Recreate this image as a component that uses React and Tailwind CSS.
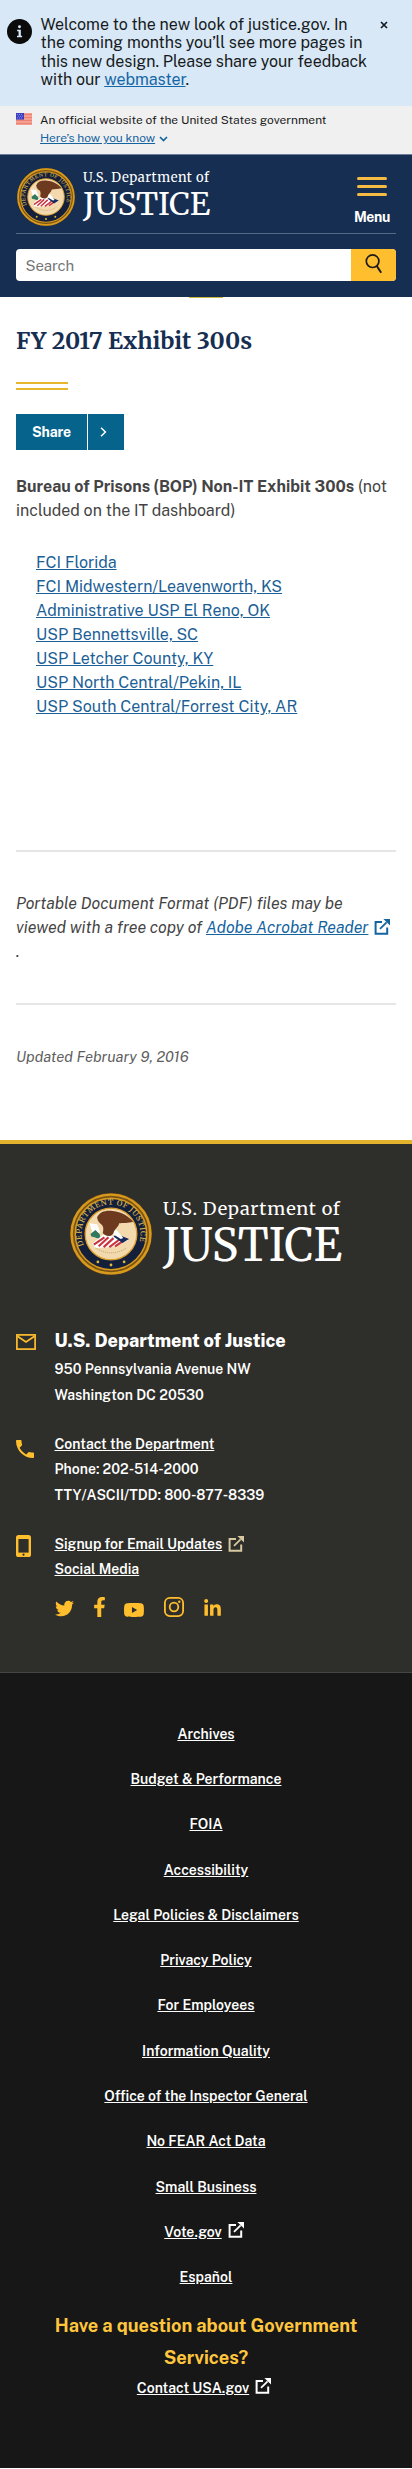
import React from 'react';
import { MdPhone } from 'react-icons/md';
import { FaTwitter, FaLinkedinIn } from 'react-icons/fa';

const EXHIBITS = [
  'FCI Florida',
  'FCI Midwestern/Leavenworth, KS',
  'Administrative USP El Reno, OK',
  'USP Bennettsville, SC',
  'USP Letcher County, KY',
  'USP North Central/Pekin, IL',
  'USP South Central/Forrest City, AR',
];

const LEGAL = [
  'Archives',
  'Budget & Performance',
  'FOIA',
  'Accessibility',
  'Legal Policies & Disclaimers',
  'Privacy Policy',
  'For Employees',
  'Information Quality',
  'Office of the Inspector General',
  'No FEAR Act Data',
  'Small Business',
  'Vote.gov',
  'Español',
];

function External({ className }) {
  return (
    <svg viewBox="0 0 16 16" className={`inline-block size-4 shrink-0 ${className}`} fill="none" stroke="currentColor" strokeWidth="2">
      <path d="M8 2.9H1.6v11.9h11.6V8.6" />
      <path d="M6 9.9l6.6-6.6" strokeWidth="1.8" />
      <path d="M9.4 0H16v6.6z" fill="currentColor" stroke="none" />
    </svg>
  );
}

function Seal({ id, className }) {
  return (
    <svg viewBox="0 0 100 100" className={className}>
      <circle cx="50" cy="50" r="50" fill="#7a5312" />
      <circle cx="50" cy="50" r="48" fill="none" stroke="#d89a1e" strokeWidth="3" />
      <circle cx="50" cy="50" r="43.6" fill="#141f3b" stroke="#d89a1e" strokeWidth="1.8" />
      <circle cx="50" cy="50" r="31.5" fill="#f3d9ae" stroke="#dca02a" strokeWidth="1.6" />
      <path id={id} d="M16.8 64A36 36 0 1 1 83.2 64" fill="none" />
      <text fill="#d8b352" fontSize="9.2" fontFamily="Merriweather, 'Liberation Serif', serif" textLength="136">
        <textPath href={`#${id}`}>DEPARTMENT OF JUSTICE</textPath>
      </text>
      <g fill="#e0bb3a">
        <circle cx="34" cy="84" r="1.7" />
        <circle cx="50" cy="87.8" r="1.7" />
        <circle cx="66" cy="84" r="1.7" />
      </g>
      <path d="M24 37l9 1 4 10-9 3z" fill="#fff" />
      <path d="M25 50l6-5 5 5 2 7-8-3-4-1z" fill="#2f7a5d" />
      <path d="M27 62l13-11 20 2 11 5-20 8-20 1z" fill="#fff" />
      <path d="M29 63l13-9M35 65l12-11M41 66l12-11M48 66l12-9M55 65l9-6" stroke="#c9353f" strokeWidth="2.6" />
      <path d="M57 50l15 6-8 5-11-8z" fill="#16295a" />
      <path d="M52 46l5-1 8 10-3 1-10-6z" fill="#fff" />
      <path d="M33 30c3-7 10-9 19-8 11 1 19 6 25 13-6 2-13 1-17 2-1 5-6 7-7 12-4 6-10 3-13 0 1-5 1-8-1-10-3-2-5-4-6-9z" fill="#6d3a20" />
      <path d="M31 67q19 12 38 0" fill="none" stroke="#b99a60" strokeWidth="1" strokeDasharray="1.5 1" />
    </svg>
  );
}

function InfoIcon() {
  return (
    <svg viewBox="0 0 24 24" className="mt-[2.5px] size-[25px] shrink-0">
      <circle cx="12" cy="12" r="12" fill="#0b0b0b" />
      <path d="M9.7 10.2h3.6v5.8h1.2v1.6H9.6V16h1.5v-4.2H9.7z" fill="#d9e8f6" />
      <circle cx="12" cy="7.4" r="1.4" fill="#d9e8f6" />
    </svg>
  );
}

function Flag() {
  return (
    <svg viewBox="0 0 16 12" className="h-3 w-4 shrink-0">
      <rect width="16" height="12" fill="#f5a08f" />
      <path d="M0 1.5h16M0 4.5h16M0 7.5h16M0 10.5h16" stroke="#ec7f78" strokeWidth="1" />
      <rect width="8" height="6.6" fill="#3a3ec0" />
      <path d="M1 1.5h6M2 3.2h5M1 5h6" stroke="#a9abf0" strokeWidth=".7" strokeDasharray="1 1" />
    </svg>
  );
}

export default function App() {
  return (
    <div className="h-[2469px] w-[412px] overflow-hidden bg-white font-['Public_Sans',Inter,sans-serif] text-base text-[#444444]">
      <section className="flex h-[106px] items-start bg-[#d9e8f6] pl-[6.5px] pt-4 text-[#161b22]">
        <InfoIcon />
        <p className="ml-[9px] w-[332px] tracking-[-0.002em] leading-[18.4px]">
          Welcome to the new look of justice.gov. In<br />
          the coming months you’ll see more pages in<br />
          this new design. Please share your feedback<br />
          with our <a className="text-[#1367a6] underline">webmaster</a>.
        </p>
        <svg viewBox="0 0 8 8" className="ml-[7.5px] mt-[5px] size-2 stroke-[#161b22]" strokeWidth="1.7">
          <path d="M1 1l6 6M7 1L1 7" />
        </svg>
      </section>

      <section className="flex h-12 gap-2 bg-[#f0f0f0] pl-4 pt-[7px] text-xs leading-[17.5px] text-[#1b1b1b]">
        <Flag />
        <div className="-mt-px">
          <p>An official website of the United States government</p>
          <p className="flex items-center gap-1 text-[#1464a0]">
            <a className="tracking-[-0.005em] underline">Here’s how you know</a>
            <svg viewBox="0 0 9 6" className="mt-0.5 h-1.5 w-[9px]" fill="none" stroke="currentColor" strokeWidth="1.7">
              <path d="M1 1l3.5 3.5L8 1" />
            </svg>
          </p>
        </div>
      </section>

      <header className="relative flex h-[143px] flex-col border-t border-[#6c7c95] bg-[#162e51] px-4">
        <div className="flex h-[79px] shrink-0 border-b border-[#536a85] pt-[13px]">
          <Seal id="seal-head" className="ml-[0.5px] size-[58px] shrink-0" />
          <div className="ml-[8.5px] whitespace-nowrap font-['Merriweather','Liberation_Serif',serif] text-white">
            <div className="text-[13px] leading-5 tracking-[0.038em]">U.S. Department of</div>
            <div className="text-[32px] leading-8 tracking-[-0.006em]">JUSTICE</div>
          </div>
          <div className="ml-auto mr-1.5 flex w-9 flex-col items-center pt-[9px]">
            <div className="flex w-[30px] flex-col gap-[5px]">
              <span className="h-[3px] rounded-sm bg-[#f6bb42]" />
              <span className="h-[3px] rounded-sm bg-[#f6bb42]" />
              <span className="h-[3px] rounded-sm bg-[#f6bb42]" />
            </div>
            <span className="mt-[11px] text-sm font-bold tracking-[-0.02em] text-white">Menu</span>
          </div>
        </div>
        <div className="mt-[15px] flex h-8 overflow-hidden rounded bg-white">
          <span className="flex-1 pl-[9.5px] pt-[5px] text-[15px] leading-6 tracking-[-0.007em] text-[#757575]">Search</span>
          <span className="flex w-[45px] justify-center bg-[#ffbe2e] pt-[5px]">
            <svg viewBox="0 0 17 20" className="-ml-px h-5 w-[17px]" fill="none" stroke="#1b1b1b" strokeWidth="1.7">
              <circle cx="7.6" cy="7.2" r="6.3" />
              <path d="M11.8 12l4.4 6.8" strokeWidth="2" />
            </svg>
          </span>
        </div>
        <i className="absolute -bottom-px left-[189px] h-px w-[34px] bg-[#c9b83a]" />
      </header>

      <main className="px-4">
        <h1 className="pt-[28px] font-['Merriweather','Liberation_Serif',serif] text-[23px] font-bold leading-8 tracking-[0.001em] text-[#162e51]">FY 2017 Exhibit 300s</h1>
        <div className="mt-[25px] h-2 w-[52px] border-y-2 border-[#e6b72e]" />
        <div className="mt-6 flex h-9 w-[108px] bg-[#05638c] text-white">
          <span className="flex w-[72px] justify-center border-r border-white pt-2 text-sm font-bold tracking-[-0.01em]">Share</span>
          <span className="flex flex-1 items-center justify-center pr-1.5">
            <svg viewBox="0 0 7 10" className="h-2.5 w-[7px]" fill="none" stroke="currentColor" strokeWidth="1.5">
              <path d="M1 .8l4.4 4.2L1 9.2" />
            </svg>
          </span>
        </div>
        <p className="mt-[25px] whitespace-nowrap leading-6">
          <strong className="font-bold">Bureau of Prisons (BOP) Non-IT Exhibit 300s</strong> (not<br />
          included on the IT dashboard)
        </p>
        <ul className="mt-7 h-[299px] pl-5 leading-6 text-[#1c5f96]">
          {EXHIBITS.map((t) => (
            <li key={t}><a className="underline">{t}</a></li>
          ))}
        </ul>
        <div className="h-[155px] border-y-2 border-[#e6e6e6] pt-10 italic leading-6">
          <p className="whitespace-nowrap">
            Portable Document Format (PDF) files may be<br />
            viewed with a free copy of <a className="text-[#1464a0] underline">Adobe Acrobat Reader</a>
            <External className="-mt-1 ml-1.5 text-[#1464a0]" /><br />.
          </p>
        </div>
        <p className="h-[135px] pt-10 text-[14.9px] italic leading-6 text-[#5f5f5f]">Updated February 9, 2016</p>
      </main>

      <footer className="text-sm font-semibold text-white">
        <div className="h-[532px] border-t-4 border-[#e3b32d] bg-[#2e2e2a]">
          <div className="flex pl-[70px] pt-[49px]">
            <Seal id="seal-foot" className="size-[82px] shrink-0" />
            <div className="ml-[11px] mt-[1.5px] whitespace-nowrap font-['Merriweather','Liberation_Serif',serif] font-normal">
              <div className="text-[18.2px] leading-7 tracking-[0.04em]">U.S. Department of</div>
              <div className="text-[44.6px] leading-[45px]">JUSTICE</div>
            </div>
          </div>
          <div className="mt-[50px] flex flex-col gap-[23.5px] px-4">
            <div className="flex">
              <div className="w-[38.5px] pt-[9px] text-[#ffbe2e]">
                <svg viewBox="0 0 20 16" className="h-4 w-5" fill="none" stroke="currentColor" strokeWidth="1.7">
                  <rect x=".9" y=".9" width="18.2" height="14.2" />
                  <path d="M1.5 2.2L10 8l8.5-5.8" />
                </svg>
              </div>
              <div className="leading-[26px]">
                <div className="pb-0.5 pt-[3px] text-[18px] font-extrabold">U.S. Department of Justice</div>
                <div>950 Pennsylvania Avenue NW</div>
                <div>Washington DC 20530</div>
              </div>
            </div>
            <div className="flex">
              <div className="w-[38.5px] pt-2 text-[#ffbe2e]"><MdPhone className="-ml-[3px] -mt-[3px] size-6" /></div>
              <div className="leading-[25.5px]">
                <div><a className="underline">Contact the Department</a></div>
                <div>Phone: 202-514-2000</div>
                <div>TTY/ASCII/TDD: 800-877-8339</div>
              </div>
            </div>
            <div className="flex">
              <div className="w-[38.5px] pt-[3px]">
                <svg viewBox="0 0 15 22" className="h-[22px] w-[15px]">
                  <rect width="15" height="22" rx="2.6" fill="#ffbe2e" />
                  <path d="M2.4 4h10.2v13.6H2.4z" fill="#2e2e2a" />
                  <circle cx="7.5" cy="19.7" r="1.1" fill="#2e2e2a" />
                </svg>
              </div>
              <div className="leading-[25.5px]">
                <div className="flex"><a className="underline">Signup for Email Updates</a><External className="ml-1.5 mt-1 text-[#d8c9a0]" /></div>
                <div><a className="underline">Social Media</a></div>
                <div className="mt-3.5 flex h-5 items-end text-[#ffbe2e]">
                  <FaTwitter className="size-[19px] translate-y-px" />
                  <svg viewBox="22.9 0 274.2 512" className="ml-[20px] h-5 w-[11px]" fill="currentColor">
                    <path d="M279.14 288l14.22-92.66h-88.91v-60.13c0-25.35 12.42-50.06 52.24-50.06h40.42V6.26S260.43 0 225.36 0c-73.22 0-121.08 44.38-121.08 124.72v70.62H22.89V288h81.39v224h100.17V288z" />
                  </svg>
                  <svg viewBox="14.9 64 546.2 384" className="ml-[19px] h-3.5 w-5" fill="currentColor">
                    <path d="M549.655 124.083c-6.281-23.65-24.787-42.276-48.284-48.597C458.781 64 288 64 288 64S117.22 64 74.629 75.486c-23.497 6.322-42.003 24.947-48.284 48.597-11.412 42.867-11.412 132.305-11.412 132.305s0 89.438 11.412 132.305c6.281 23.65 24.787 41.5 48.284 47.821C117.22 448 288 448 288 448s170.78 0 213.371-11.486c23.497-6.321 42.003-24.171 48.284-47.821 11.412-42.867 11.412-132.305 11.412-132.305s0-89.438-11.412-132.305zm-317.51 213.508V175.185l142.739 81.205-142.739 81.201z" />
                  </svg>
                  <svg viewBox="0 0 20 20" className="ml-5 size-5" fill="none" stroke="currentColor" strokeWidth="1.8">
                    <rect x=".9" y=".9" width="18.2" height="18.2" rx="5" />
                    <circle cx="10" cy="10" r="4.3" />
                    <circle cx="15.3" cy="4.7" r="1.2" fill="currentColor" stroke="none" />
                  </svg>
                  <FaLinkedinIn className="ml-[19px] size-[19px] translate-y-px" />
                </div>
              </div>
            </div>
          </div>
        </div>

        <div className="h-[796px] border-t border-[#454545] bg-[#171717] pt-[38px] text-center">
          <ul>
            {LEGAL.map((t) => (
              <li key={t} className="flex h-[45.3px] items-center justify-center">
                <a className="underline">{t}</a>
                {t === 'Vote.gov' && <External className="-mt-1 ml-1.5 mr-1" />}
              </li>
            ))}
          </ul>
          <h2 className="mt-[10px] text-[18.2px] font-bold leading-8 text-[#ffc63d]">
            Have a question about Government<br />Services?
          </h2>
          <div className="flex h-7 items-center justify-center">
            <a className="underline">Contact USA.gov</a>
            <External className="-mt-1 ml-1.5 mr-1" />
          </div>
        </div>
      </footer>
    </div>
  );
}
